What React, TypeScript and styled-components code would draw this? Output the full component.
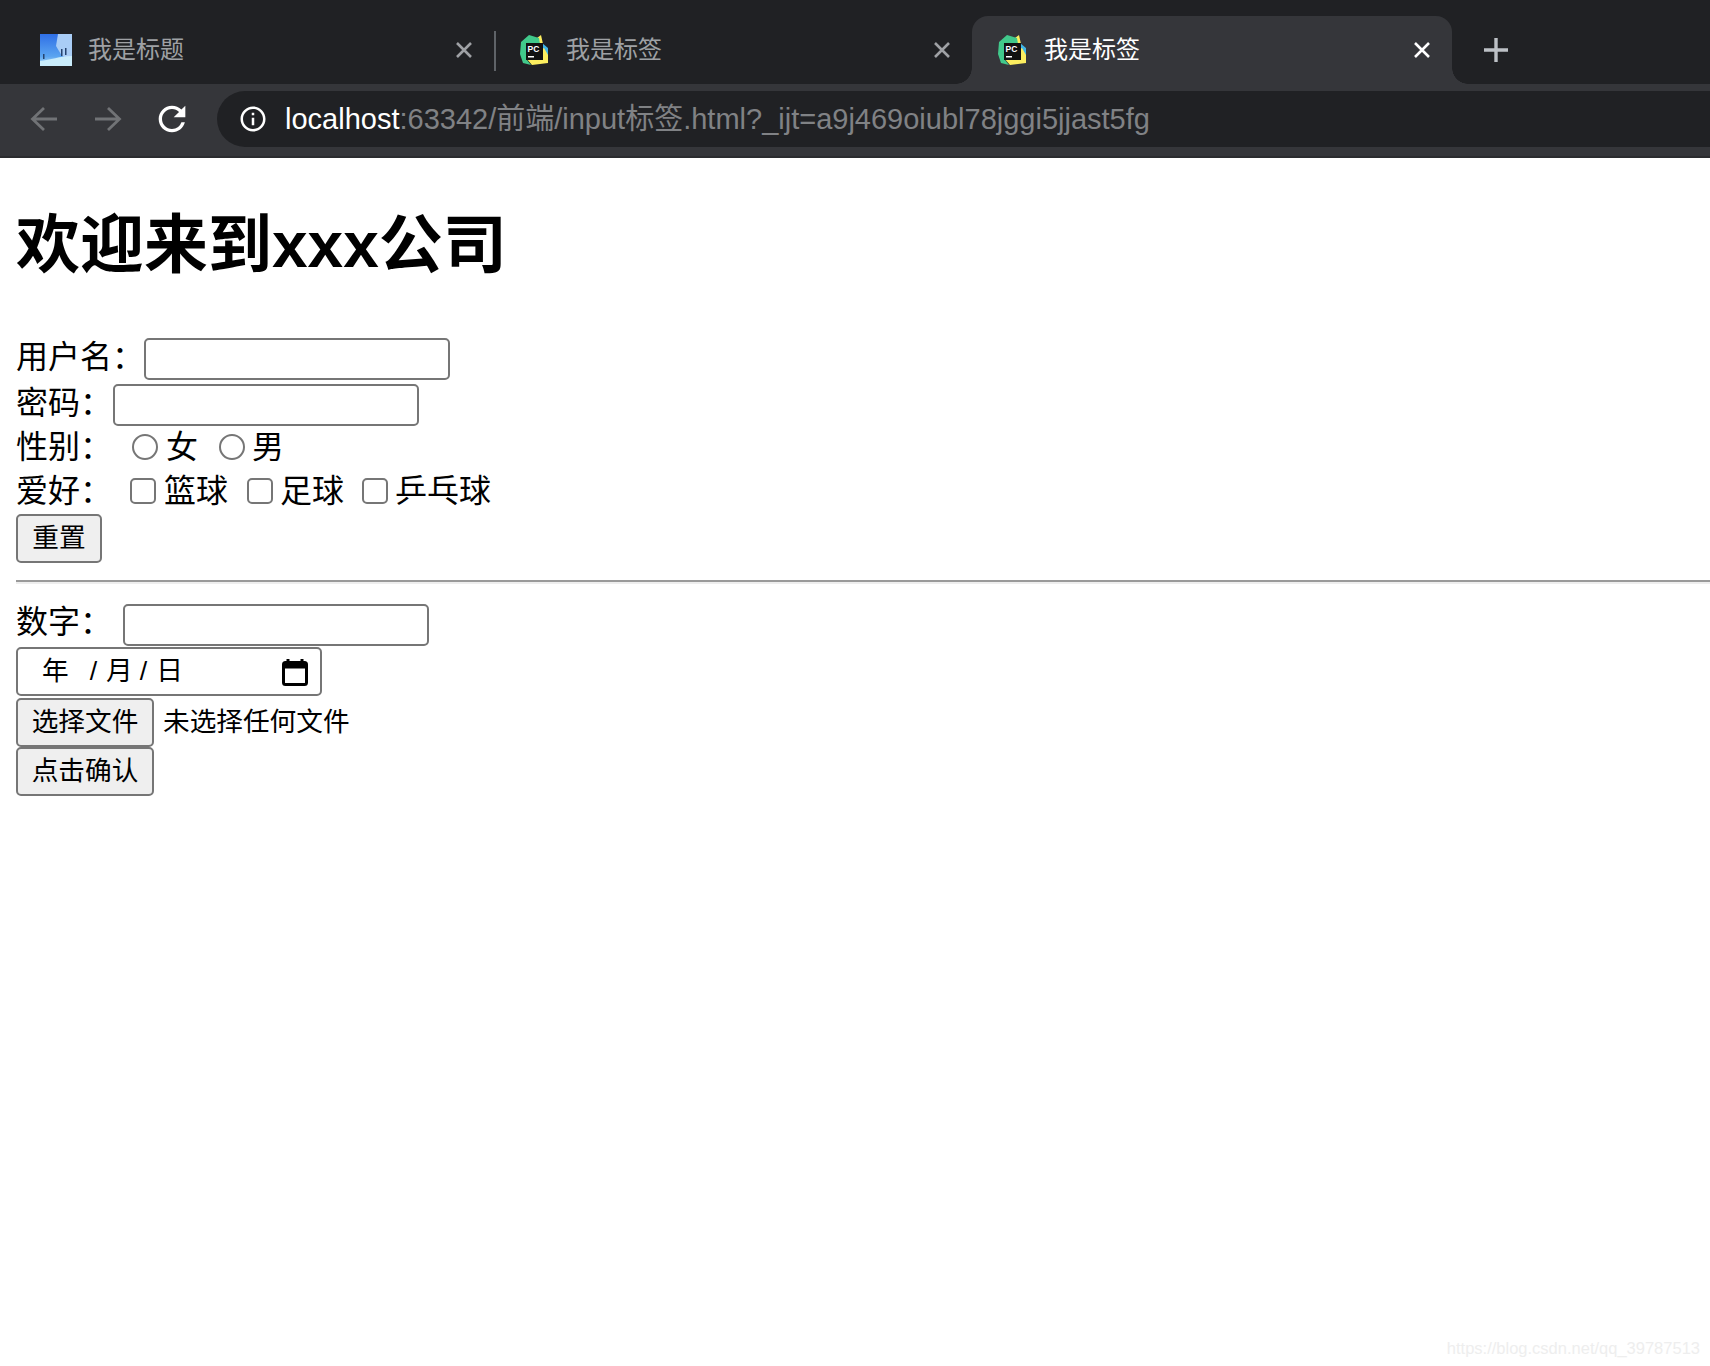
import React from 'react';
import styled, { createGlobalStyle } from 'styled-components';

const GlobalStyle = createGlobalStyle`
  html, body {
    margin: 0;
    width: 1710px;
    height: 1366px;
    overflow: hidden;
    background: #fff;
  }
  body {
    font-family: "Liberation Sans", "Noto Sans CJK SC", sans-serif;
    color: #000;
  }
`;

const Page = styled.div`
  position: relative;
  width: 1710px;
  height: 1366px;
  overflow: hidden;
`;

// 브라우저 상단
const TabStrip = styled.div`
  display: flex;
  height: 84px;
  padding: 16px 0 0 16px;
  box-sizing: border-box;
  background: #202124;
`;

const Tab = styled.div<{ $active?: boolean; $divider?: boolean }>`
  position: relative;
  display: flex;
  align-items: center;
  flex: none;
  width: ${(p) => (p.$active ? 480 : 478)}px;
  height: 68px;
  padding: 0 14px 0 24px;
  box-sizing: border-box;
  border-radius: 16px 16px 0 0;
  background: ${(p) => (p.$active ? '#35363a' : 'transparent')};
  color: ${(p) => (p.$active ? '#fff' : '#9fa1a5')};

  ${(p) =>
    p.$divider &&
    `&::after {
      content: '';
      position: absolute;
      right: -2px;
      top: 15px;
      width: 2px;
      height: 40px;
      background: #5f6368;
    }`}

  ${(p) =>
    p.$active &&
    `&::before, &::after {
      content: '';
      position: absolute;
      bottom: 0;
      width: 16px;
      height: 16px;
    }
    &::before {
      left: -16px;
      background: radial-gradient(circle at 0 0, transparent 15.5px, #35363a 16px);
    }
    &::after {
      right: -16px;
      background: radial-gradient(circle at 100% 0, transparent 15.5px, #35363a 16px);
    }`}
`;

const Favicon = styled.svg`
  flex: none;
  width: 32px;
  height: 32px;
`;

const TabTitle = styled.span`
  flex: 1;
  margin-left: 16px;
  font-size: 24px;
  line-height: 1;
`;

const CloseIcon = styled.svg`
  flex: none;
  width: 32px;
  height: 32px;
`;

const NewTab = styled.svg`
  flex: none;
  width: 32px;
  height: 32px;
  margin: 18px 0 0 28px;
`;

const Toolbar = styled.div`
  display: flex;
  align-items: center;
  height: 74px;
  padding: 0 0 2px 12px;
  box-sizing: border-box;
  background: #35363a;
  border-bottom: 2px solid #2b2c2f;
`;

const NavButton = styled.div<{ $dim?: boolean }>`
  display: flex;
  align-items: center;
  justify-content: center;
  flex: none;
  width: 64px;
  height: 56px;
  color: ${(p) => (p.$dim ? '#717376' : '#fff')};
`;

const AddressBar = styled.div`
  display: flex;
  align-items: center;
  flex: none;
  width: 1540px;
  height: 56px;
  margin-left: 13px;
  padding-left: 21px;
  box-sizing: border-box;
  border-radius: 28px 0 0 28px;
  background: #202124;
`;

const Url = styled.span`
  margin-left: 17px;
  font-size: 29px;
  line-height: 1;
  white-space: nowrap;
  color: #808285;

  b {
    font-weight: 400;
    color: #fff;
  }
`;

// 페이지 본문
const Content = styled.main`
  padding: 42px 0 0 16px;
`;

const Title = styled.h1`
  height: 90px;
  margin: 0 0 48px;
  font-size: 64px;
  line-height: 90px;
  font-weight: 700;
`;

const Row = styled.div<{ $height: number; $mb?: number }>`
  display: flex;
  align-items: center;
  height: ${(p) => p.$height}px;
  margin-bottom: ${(p) => p.$mb ?? 0}px;
`;

const Label = styled.span<{ $lift?: number }>`
  flex: none;
  font-size: 32px;
  line-height: 1;
  padding-bottom: ${(p) => p.$lift ?? 0}px;
`;

const TextInput = styled.input<{ $ml?: number }>`
  flex: none;
  width: 306px;
  height: 42px;
  margin: 0 0 0 ${(p) => p.$ml ?? 0}px;
  padding: 0;
  box-sizing: border-box;
  border: 2px solid #767676;
  border-radius: 5px;
  background: #fff;
  outline: none;
`;

const Choice = styled.input<{ $ml: number; $mr: number }>`
  appearance: none;
  flex: none;
  width: 26px;
  height: 26px;
  margin: 0 ${(p) => p.$mr}px 0 ${(p) => p.$ml}px;
  box-sizing: border-box;
  border: 2px solid #767676;
  border-radius: ${(p) => (p.type === 'radio' ? '50%' : '5px')};
  background: #fff;
`;

const PlainButton = styled.button<{ $width: number }>`
  display: block;
  flex: none;
  width: ${(p) => p.$width}px;
  height: 49px;
  margin: 0;
  padding: 0;
  box-sizing: border-box;
  border: 2px solid #767676;
  border-radius: 5px;
  background: #efefef;
  color: #000;
  font-family: inherit;
  font-size: 26.67px;
  line-height: 1;
`;

const Rule = styled.hr`
  height: 4px;
  margin: 17px 0 20px;
  padding: 0;
  box-sizing: border-box;
  border: none;
  border-top: 2px solid #9a9a9a;
  border-bottom: 2px solid #eee;
`;

const DateField = styled.div`
  display: flex;
  align-items: center;
  width: 306px;
  height: 49px;
  padding: 0 12px 0 24px;
  margin: 1px 0;
  box-sizing: border-box;
  border: 2px solid #767676;
  border-radius: 5px;
  background: #fff;
  font-size: 26.67px;
  line-height: 1;
`;

const DatePart = styled.span<{ $ml?: number }>`
  margin-left: ${(p) => p.$ml ?? 0}px;
`;

const CalendarIcon = styled.svg`
  flex: none;
  width: 26px;
  height: 28px;
  margin-left: auto;
`;

const FileName = styled.span`
  margin-left: 9px;
  font-size: 26.67px;
  line-height: 1;
`;

const Watermark = styled.div`
  position: absolute;
  right: 10px;
  bottom: 10px;
  font-size: 16.5px;
  line-height: 1;
  color: #eeeeee;
`;

function SkyIcon() {
  return (
    <Favicon viewBox="0 0 32 32">
      <defs>
        <linearGradient id="sky" x1="0" y1="0" x2="0" y2="1">
          <stop offset="0" stopColor="#2f6fe6" />
          <stop offset="0.7" stopColor="#5aa4f0" />
          <stop offset="1" stopColor="#b8e2f8" />
        </linearGradient>
      </defs>
      <rect width="32" height="32" fill="url(#sky)" />
      <path d="M18 0h14v26l-10-4-6-10z" fill="#a9cdf6" />
      <path d="M0 32V27c10-1 20-5 32-5v10z" fill="#c9ecfb" />
      <path d="M21 15h1.500v7H21zM25 14h1.500v7H25zM3 20h1.500v5H3z" fill="#25436e" />
    </Favicon>
  );
}

function PyCharmIcon() {
  return (
    <Favicon viewBox="0 0 32 32">
      <path d="M21 2l3 7 6 5v8l-4 2z" fill="#41b6e6" />
      <path d="M19 4l4-3 2 9-6 0zM26 14l4 7v8l-16 2-6-7z" fill="#fcee5f" />
      <path d="M3 8l8-7 10 3 1 6H9v16l4 5-8-2-3-9z" fill="#41c98b" />
      <rect x="8" y="9" width="17" height="17" fill="#111" />
      <text x="9.500" y="18" fontFamily="Liberation Sans, sans-serif" fontWeight="700" fontSize="8.500" fill="#fff">PC</text>
      <rect x="10" y="22" width="6" height="1.500" fill="#fff" />
    </Favicon>
  );
}

function Close() {
  return (
    <CloseIcon viewBox="0 0 32 32">
      <path d="M9 9l14 14M23 9L9 23" stroke="currentColor" strokeWidth="2.600" fill="none" />
    </CloseIcon>
  );
}

export default function App() {
  return (
    <Page>
      <GlobalStyle />
      <TabStrip>
        <Tab $divider>
          <SkyIcon />
          <TabTitle>我是标题</TabTitle>
          <Close />
        </Tab>
        <Tab>
          <PyCharmIcon />
          <TabTitle>我是标签</TabTitle>
          <Close />
        </Tab>
        <Tab $active>
          <PyCharmIcon />
          <TabTitle>我是标签</TabTitle>
          <Close />
        </Tab>
        <NewTab viewBox="0 0 32 32">
          <path d="M16 4v24M4 16h24" stroke="#bdc1c6" strokeWidth="3.400" fill="none" />
        </NewTab>
      </TabStrip>

      <Toolbar>
        <NavButton $dim>
          <svg width="32" height="32" viewBox="0 0 32 32" fill="none" stroke="currentColor" strokeWidth="2.800">
            <path d="M29 16H5M16 5L4.500 16 16 27" />
          </svg>
        </NavButton>
        <NavButton $dim>
          <svg width="32" height="32" viewBox="0 0 32 32" fill="none" stroke="currentColor" strokeWidth="2.800">
            <path d="M3 16h24M16 5l11.500 11L16 27" />
          </svg>
        </NavButton>
        <NavButton>
          <svg width="40" height="40" viewBox="0 0 24 24" fill="currentColor">
            <path d="M17.650 6.350A7.958 7.958 0 0 0 12 4c-4.420 0-7.990 3.580-7.990 8s3.570 8 7.990 8c3.730 0 6.840-2.550 7.730-6h-2.080A5.990 5.990 0 0 1 12 18c-3.310 0-6-2.690-6-6s2.690-6 6-6c1.660 0 3.140.690 4.220 1.780L13 11h7V4l-2.350 2.350z" />
          </svg>
        </NavButton>
        <AddressBar>
          <svg width="30" height="30" viewBox="0 0 24 24" fill="#fff">
            <path d="M11 7h2v2h-2zm0 4h2v6h-2zm1-9C6.480 2 2 6.480 2 12s4.480 10 10 10 10-4.480 10-10S17.520 2 12 2zm0 18c-4.410 0-8-3.590-8-8s3.590-8 8-8 8 3.590 8 8-3.590 8-8 8z" />
          </svg>
          <Url>
            <b>localhost</b>:63342/前端/input标签.html?_ijt=a9j469oiubl78jggi5jjast5fg
          </Url>
        </AddressBar>
      </Toolbar>

      <Content>
        <Title>欢迎来到xxx公司</Title>

        <Row $height={42} $mb={4}>
          <Label $lift={4}>用户名：</Label>
          <TextInput type="text" />
        </Row>
        <Row $height={42}>
          <Label $lift={4}>密码：</Label>
          <TextInput type="password" $ml={1} />
        </Row>
        <Row $height={42}>
          <Label>性别：</Label>
          <Choice type="radio" name="sex" $ml={20} $mr={8} />
          <Label>女</Label>
          <Choice type="radio" name="sex" $ml={21} $mr={7} />
          <Label>男</Label>
        </Row>
        <Row $height={46}>
          <Label>爱好：</Label>
          <Choice type="checkbox" $ml={18} $mr={8} />
          <Label>篮球</Label>
          <Choice type="checkbox" $ml={19} $mr={7} />
          <Label>足球</Label>
          <Choice type="checkbox" $ml={18} $mr={7} />
          <Label>乒乓球</Label>
        </Row>
        <PlainButton type="button" $width={86}>重置</PlainButton>

        <Rule />

        <Row $height={42}>
          <Label $lift={6}>数字：</Label>
          <TextInput type="text" $ml={11} />
        </Row>
        <DateField>
          <DatePart>年</DatePart>
          <DatePart $ml={21}>/</DatePart>
          <DatePart $ml={9}>月</DatePart>
          <DatePart $ml={7}>/</DatePart>
          <DatePart $ml={9}>日</DatePart>
          <CalendarIcon viewBox="0 0 26 28">
            <path d="M6 1v4M20 1v4" stroke="#000" strokeWidth="3" fill="none" />
            <rect x="1.500" y="4.500" width="23" height="22" rx="2" fill="none" stroke="#000" strokeWidth="3" />
            <rect x="1.500" y="4.500" width="23" height="6" fill="#000" />
          </CalendarIcon>
        </DateField>
        <Row $height={50}>
          <PlainButton type="button" $width={138}>选择文件</PlainButton>
          <FileName>未选择任何文件</FileName>
        </Row>
        <PlainButton type="button" $width={138}>点击确认</PlainButton>
      </Content>

      <Watermark>https://blog.csdn.net/qq_39787513</Watermark>
    </Page>
  );
}
